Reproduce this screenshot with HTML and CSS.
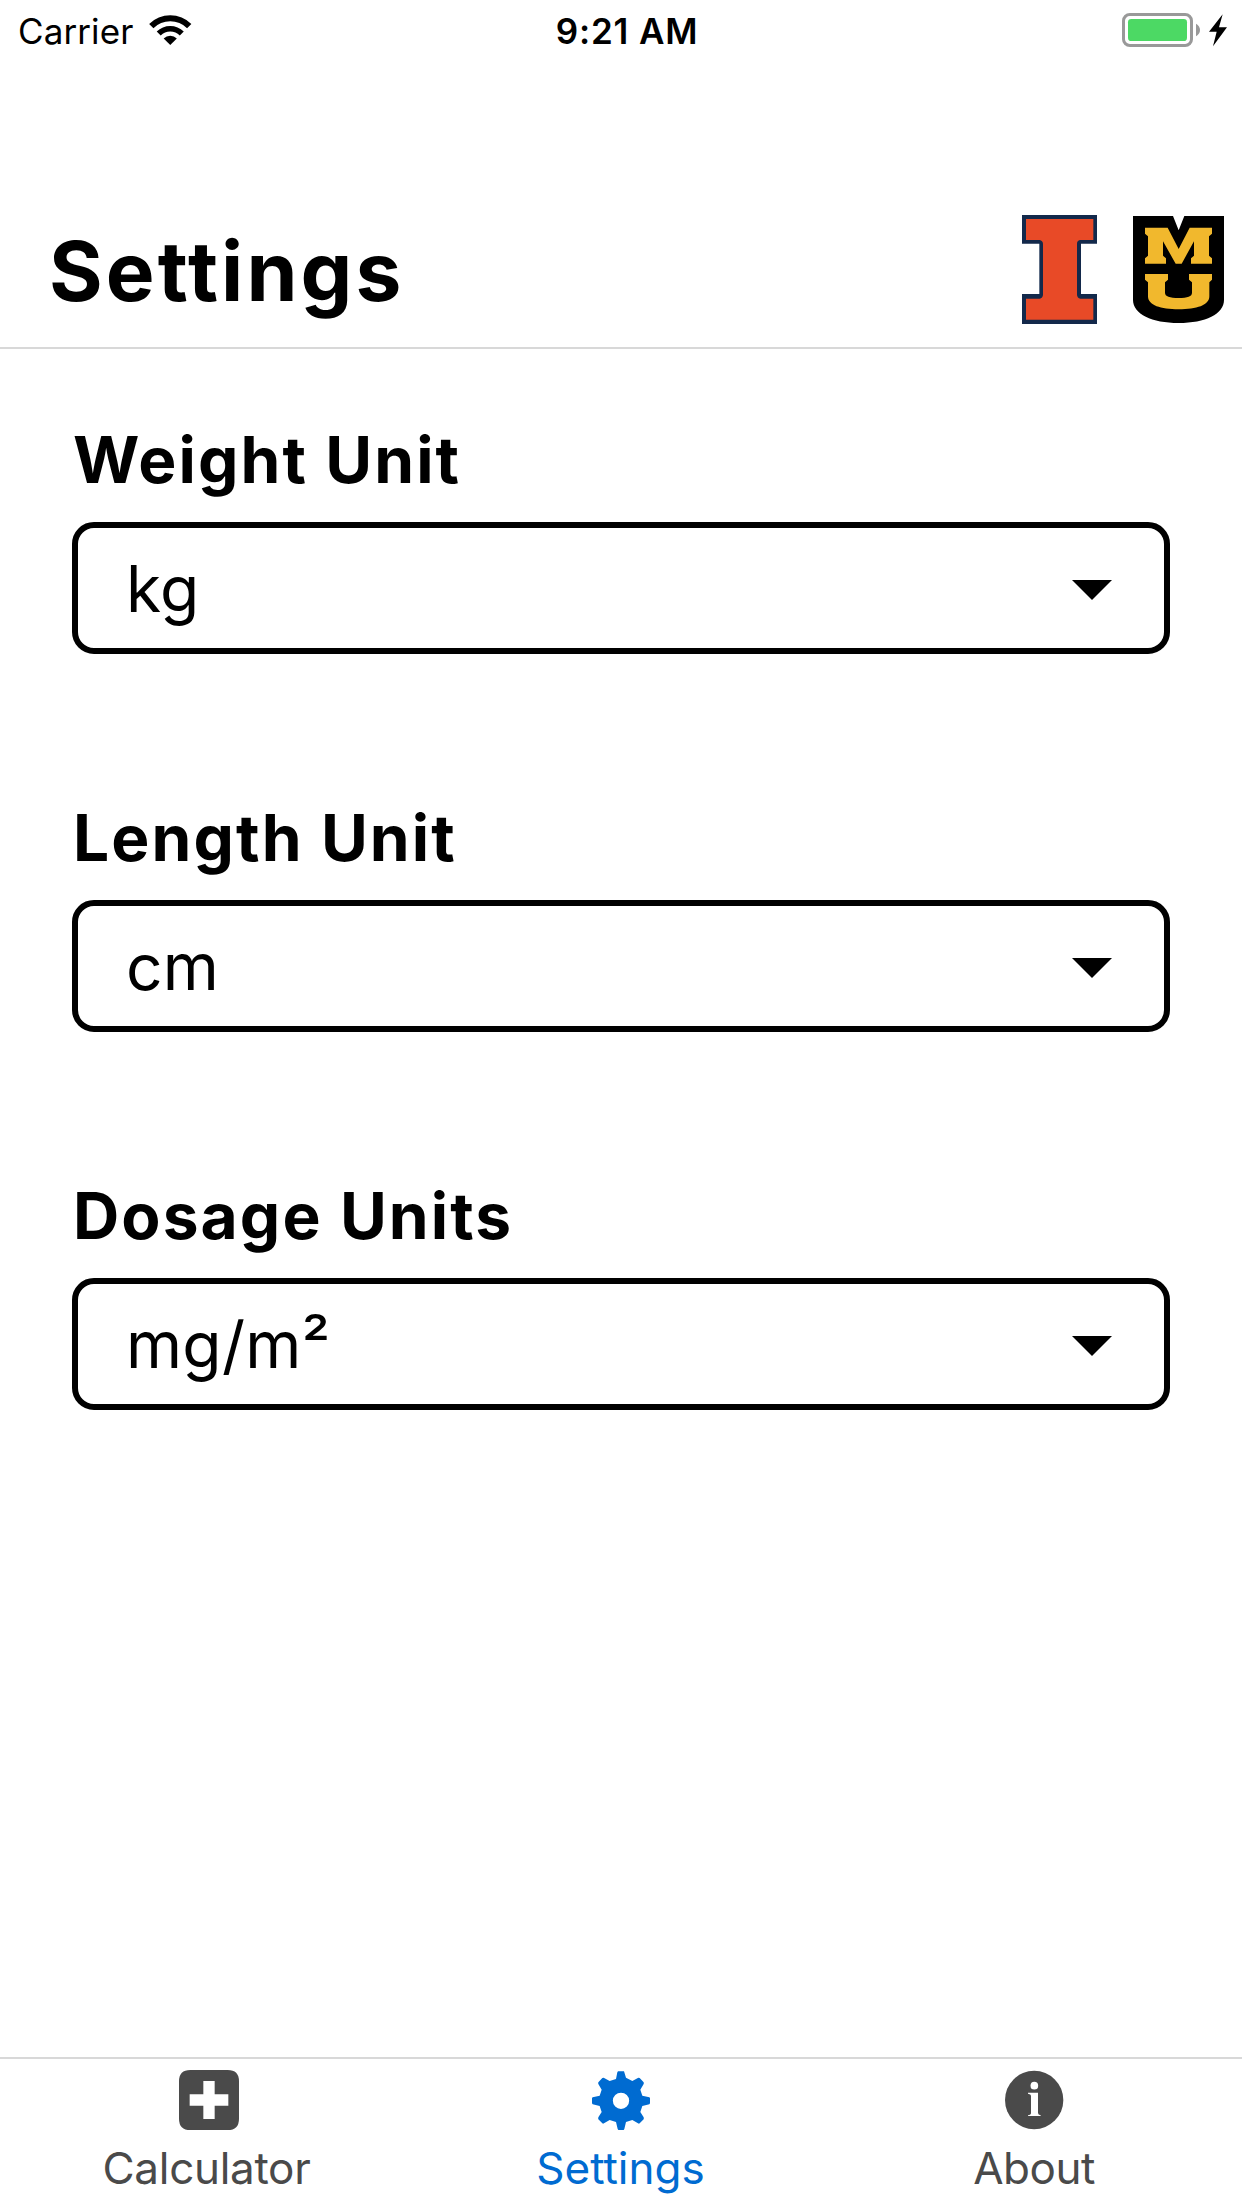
FILE: index.html
```html
<!DOCTYPE html>
<html lang="en">
<head>
<meta charset="utf-8">
<title>Settings</title>
<link rel="stylesheet" href="styles.css">
</head>
<body>
<div class="app">
  <div class="status">
    <div class="status-left">
      <span class="carrier">Carrier</span>
      <svg class="wifi" viewBox="-64 -91 128 91">
        <path d="M-64 -64A91 91 0 0 1 64 -64L51 -51A72 72 0 0 0 -51 -51Z"/>
        <path d="M-41 -41A58.500 58.500 0 0 1 41 -41L29 -29A41 41 0 0 0 -29 -29Z"/>
        <path d="M0 0L-20 -20A28 28 0 0 1 20 -20Z"/>
      </svg>
    </div>
    <span class="time">9:21 AM</span>
    <div class="status-right">
      <svg class="battery" viewBox="66 39 318 102">
        <rect x="70.500" y="43.500" width="204" height="93" rx="19" fill="none" stroke="#999" stroke-width="9"/>
        <rect x="84" y="57" width="177" height="66" rx="10" fill="#4cd964"/>
        <path d="M288 71Q300 78 300 90T288 109Z" fill="#999"/>
        <path d="M368 43L327 95H350L339 139L381 82H357Z"/>
      </svg>
    </div>
  </div>

  <header class="header">
    <h1 class="title">Settings</h1>
    <div class="logos">
      <svg class="logo-i" viewBox="66 45 225 327">
        <path fill="#13294b" d="M66 45H291V131H243V282H291V372H66V282H118V131H66Z"/>
        <path fill="#e84a27" d="M78 57H280V120H240Q231 122 231 131V285Q232 294 241 296H280V359H78V296H119Q128 294 129 285V131Q128 122 119 120H78Z"/>
      </svg>
      <svg class="logo-mu" viewBox="399 48 273 321">
        <path d="M399 48H519L536 91L553 48H672V300C672 342 616 369 536 369S399 342 399 300Z"/>
        <g fill="#f1b82d">
          <path d="M435 83H503L536 147L569 83H636V101L627 109V167L636 175V191H573V175L582 167V124L545 191H527L489 124V167L498 175V191H435V175L444 167V109L435 101Z"/>
          <path d="M435 222H504V239L495 247V278C495 289 509 294 536 294S576 289 576 278V247L567 239V222H636V239L628 247V289C628 316 590 328 536 328S444 316 444 289V247L435 239Z"/>
        </g>
      </svg>
    </div>
  </header>

  <main class="form">
    <section class="field">
      <h2 class="label">Weight Unit</h2>
      <div class="select"><span>kg</span><svg class="caret" viewBox="0 0 40 20"><path d="M0 0H40L20 20Z"/></svg></div>
    </section>
    <section class="field">
      <h2 class="label">Length Unit</h2>
      <div class="select"><span>cm</span><svg class="caret" viewBox="0 0 40 20"><path d="M0 0H40L20 20Z"/></svg></div>
    </section>
    <section class="field">
      <h2 class="label">Dosage Units</h2>
      <div class="select"><span>mg/m²</span><svg class="caret" viewBox="0 0 40 20"><path d="M0 0H40L20 20Z"/></svg></div>
    </section>
  </main>

  <nav class="tabs">
    <a class="tab tab-calculator">
      <svg class="tab-icon" viewBox="0 0 180 180">
        <path fill-rule="evenodd" d="M34 0H146Q180 0 180 34V146Q180 180 146 180H34Q0 180 0 146V34Q0 0 34 0ZM73 33V73H32V107H73V147H107V107H148V73H107V33Z"/>
      </svg>
      <span>Calculator</span>
    </a>
    <a class="tab tab-settings active">
      <svg class="tab-icon" viewBox="243 90 180 180">
        <path fill-rule="evenodd" d="M324 94H342Q345 104 348 113L367 123L385 113Q387 113 389 114L401 127Q402 130 401 132L391 149L397 167L418 172Q420 173 420 175V190L418 193L397 198L391 216L401 232Q402 236 401 238L389 250Q387 252 384 250L367 240L348 246L343 267L341 270H325L323 267L318 246L299 240L282 250Q279 252 277 250L265 238Q264 236 265 232L275 216L269 198L248 193L246 190V175Q246 173 248 172L269 167L275 149L265 132Q264 130 265 127L277 114Q279 113 281 113L299 123L318 117L322 97ZM333 158A24.500 24.500 0 1 0 333 207A24.500 24.500 0 1 0 333 158Z"/>
      </svg>
      <span>Settings</span>
    </a>
    <a class="tab tab-about">
      <svg class="tab-icon" viewBox="162 90 180 180">
        <circle cx="252.500" cy="180" r="87.500"/>
        <circle cx="253" cy="137" r="11.500" fill="#fff"/>
        <path fill="#fff" d="M234 158H264V219Q264 225 272 226V228H234V226Q243 225 243 219V167Q243 162 234 161Z"/>
      </svg>
      <span>About</span>
    </a>
  </nav>
</div>
</body>
</html>
```
FILE: styles.css
```css
* { box-sizing: border-box; }
body {
  margin: 0;
  background: #fff;
  color: #000;
  font-family: Inter, "Liberation Sans", sans-serif;
}
svg { display: block; flex: none; }
.app {
  width: 1242px;
  height: 2208px;
  display: flex;
  flex-direction: column;
}

.status {
  height: 60px;
  display: grid;
  grid-template-columns: 1fr auto 1fr;
  padding: 0 14px 0 18px;
  font-size: 35px;
  line-height: 63px;
}
.status-left { display: flex; }
.carrier { letter-spacing: 0.1px; }
.wifi { width: 42.500px; height: 30px; margin: 15px 0 0 16px; }
.time { font-weight: 600; letter-spacing: 0.85px; padding-left: 8px; }
.status-right { display: flex; justify-content: flex-end; }
.battery { width: 106px; height: 34px; margin-top: 13px; }

.header {
  height: 289px;
  display: flex;
  justify-content: space-between;
  align-items: flex-start;
  padding: 155px 18px 0 49px;
  border-bottom: 2px solid #d8d8d8;
}
.title {
  margin: 7px 0 0;
  font-size: 82px;
  line-height: 100px;
  font-weight: 700;
  letter-spacing: 3.1px;
}
.logos { display: flex; gap: 36px; }
.logo-i { width: 75px; height: 109px; }
.logo-mu { width: 91px; height: 107px; margin-top: 1px; }

.form {
  flex: 1;
  display: flex;
  flex-direction: column;
  gap: 144px;
  padding: 71px 72px 0;
}
.label {
  margin: 0 0 22px;
  padding-left: 1px;
  font-size: 64px;
  line-height: 80px;
  font-weight: 700;
  letter-spacing: 2.1px;
}
.select {
  height: 132px;
  display: flex;
  align-items: center;
  justify-content: space-between;
  padding: 0 52px 0 48px;
  border: 6px solid #000;
  border-radius: 22px;
  font-size: 64px;
  letter-spacing: 0.3px;
}
.caret { width: 40px; height: 20px; margin-top: 4px; }

.tabs {
  height: 151px;
  display: grid;
  grid-template-columns: repeat(3, 1fr);
  border-top: 2px solid #d8d8d8;
}
.tab {
  display: flex;
  flex-direction: column;
  align-items: center;
  padding-top: 11px;
  color: #4a4a4a;
  fill: currentColor;
  font-size: 44px;
  line-height: 56px;
}
.active { color: #006bd1; }
.active span { margin-left: -1px; }
.tab-icon { width: 60px; height: 60px; margin-bottom: 10px; }
.tab-calculator { padding-left: 3px; }
.tab-calculator span { letter-spacing: -0.3px; margin-left: -4px; }
.tab-about { padding-right: 2px; }
.tab-about span { letter-spacing: -0.5px; }
```
